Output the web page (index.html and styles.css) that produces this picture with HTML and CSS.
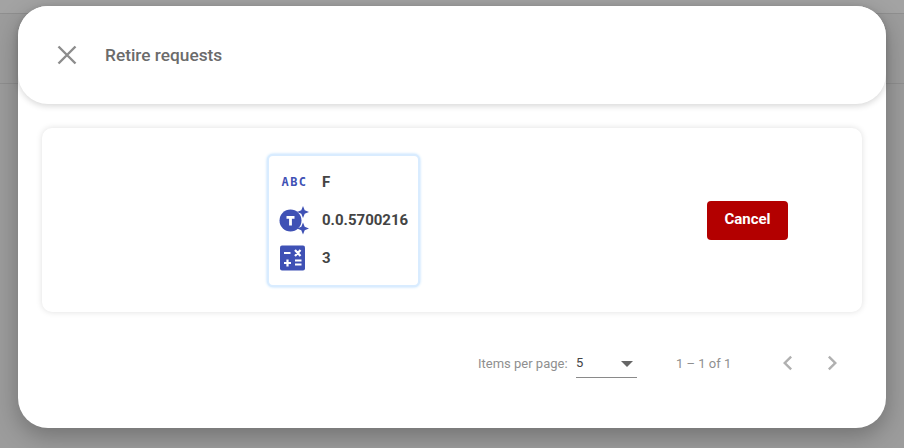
FILE: index.html
```html
<!DOCTYPE html>
<html lang="en">
<head>
<meta charset="utf-8">
<title>Retire requests</title>
<link rel="stylesheet" href="styles.css">
</head>
<body>
<div class="dialog">
  <header class="head">
    <svg class="close" width="24" height="24" viewBox="0 0 24 24"><path d="M3.500 3.500l17 17M20.500 3.500l-17 17" fill="none" stroke="#8c8c8c" stroke-width="2.400"/></svg>
    <h1 class="title">Retire requests</h1>
  </header>
  <section class="card">
    <div class="token">
      <div class="row">
        <svg class="ic" width="29" height="26" viewBox="0 0 29 26"><text x="15.500" y="17" class="abc">ABC</text></svg>
        <span class="val">F</span>
      </div>
      <div class="row">
        <svg class="ic" width="30" height="30" viewBox="0 0 30 30">
          <circle cx="11.500" cy="15.500" r="11" fill="#3f51b5"/>
          <path d="M7.500 11h8v2.700h-2.600v6.800h-2.800v-6.800H7.500z" fill="#fff"/>
          <path d="M24 1l1.700 4.300L30 7l-4.300 1.700L24 13l-1.700-4.300L18 7l4.300-1.700zM24 17.500l1.700 4.300 4.300 1.700-4.300 1.700L24 29.500l-1.700-4.300-4.300-1.700 4.300-1.700z" fill="#3f51b5"/>
        </svg>
        <span class="val">0.0.5700216</span>
      </div>
      <div class="row">
        <svg class="ic" width="29" height="26" viewBox="0 0 29 26">
          <rect x="1" y="0.500" width="25" height="25" rx="2" fill="#3f51b5"/>
          <path d="M5 8h6.500M16 5l5.500 6M21.500 5L16 11M5 18h7M8.500 14.500v7M16 15.500h6.500M16 19.500h6.500" fill="none" stroke="#fff" stroke-width="2.200"/>
        </svg>
        <span class="val">3</span>
      </div>
    </div>
    <button class="cancel" type="button">Cancel</button>
  </section>
  <footer class="pager">
    <span class="label">Items per page:</span>
    <div class="select"><span>5</span><i class="caret"></i></div>
    <span class="range">1 – 1 of 1</span>
    <div class="nav">
      <svg width="24" height="24" viewBox="0 0 24 24"><path d="M16 6.400L14.300 4.800 7 12l7.300 7.200 1.700-1.600L10.400 12z" fill="#b0b0b0"/></svg>
      <svg width="24" height="24" viewBox="0 0 24 24"><path d="M9.700 4.800L8 6.400 13.600 12 8 17.600l1.700 1.600L17 12z" fill="#b0b0b0"/></svg>
    </div>
  </footer>
</div>
</body>
</html>
```
FILE: styles.css
```css
* { box-sizing: border-box; }
html, body { height: 100%; }
body {
  margin: 0;
  overflow: hidden;
  padding: 6px 18px 0;
  font-family: Roboto, "Liberation Sans", sans-serif;
  background:
    linear-gradient(#8f8f8f, #8f8f8f) 0 13px / 100% 1px no-repeat,
    linear-gradient(#8f8f8f, #8f8f8f) 0 83px / 100% 1px no-repeat,
    linear-gradient(#a3a3a3, #a3a3a3) 0 0 / 100% 13px no-repeat,
    linear-gradient(#9c9c9c, #9c9c9c);
}
.dialog {
  width: 868px;
  height: 422px;
  background: #fff;
  border-radius: 30px;
  box-shadow: 0 8px 24px rgba(0,0,0,.28);
  display: flex;
  flex-direction: column;
}
.head {
  height: 98px;
  flex: none;
  border-radius: 30px;
  background: #fff;
  box-shadow: 0 2px 6px rgba(0,0,0,.16);
  display: flex;
  align-items: center;
  padding: 0 0 0 37px;
}
.close { flex: none; }
.title {
  margin: 0 0 0 26px;
  font-size: 17.300px;
  font-weight: 500;
  color: #6b6b6b;
}
.card {
  margin: 24px 24px 0;
  height: 184px;
  flex: none;
  border-radius: 10px;
  background: #fff;
  box-shadow: 0 0 6px rgba(0,0,0,.13);
  display: flex;
  align-items: center;
  padding: 0 74px 0 225px;
  justify-content: space-between;
}
.token {
  width: 153px;
  height: 133px;
  border-radius: 6px;
  background: #fff;
  border: 2px solid #d9ecff;
  box-shadow: 0 0 3px #b5dbff;
  display: flex;
  flex-direction: column;
  justify-content: center;
  gap: 8px;
  padding-left: 10px;
}
.row { display: flex; align-items: center; height: 30px; }
.ic { flex: none; margin-right: 14px; }
.row:nth-child(2) .ic { margin-right: 13px; }
.abc {
  font-family: "DejaVu Sans Mono", monospace;
  font-size: 12px;
  font-weight: 700;
  fill: #3f51b5;
  text-anchor: middle;
  letter-spacing: 1.400px;
}
.val { font-size: 15px; font-weight: 700; color: #444; white-space: nowrap; }
.cancel {
  width: 81px;
  height: 39px;
  border: 0;
  border-radius: 4px;
  background: #b30000;
  color: #fff;
  font: 700 15px Roboto, "Liberation Sans", sans-serif;
  padding: 0 0 2px;
}
.pager {
  display: flex;
  align-items: center;
  margin-top: 28px;
  height: 46px;
  padding-left: 460px;
  font-size: 13px;
  color: #8f8f8f;
}
.label { width: 98px; flex: none; white-space: nowrap; }
.select {
  width: 61px;
  height: 30px;
  flex: none;
  display: flex;
  align-items: center;
  justify-content: space-between;
  border-bottom: 1px solid #8a8a8a;
  color: #444;
  font-size: 13px;
  padding: 0 2px 0 0;
}
.caret {
  width: 0;
  height: 0;
  margin-top: 2px;
  border: 6px solid transparent;
  border-top: 6px solid #666;
  border-bottom: 0;
  margin-right: 2px;
}
.range { margin-left: 39px; width: 100px; flex: none; white-space: nowrap; }
.nav { display: flex; gap: 20px; }
```
